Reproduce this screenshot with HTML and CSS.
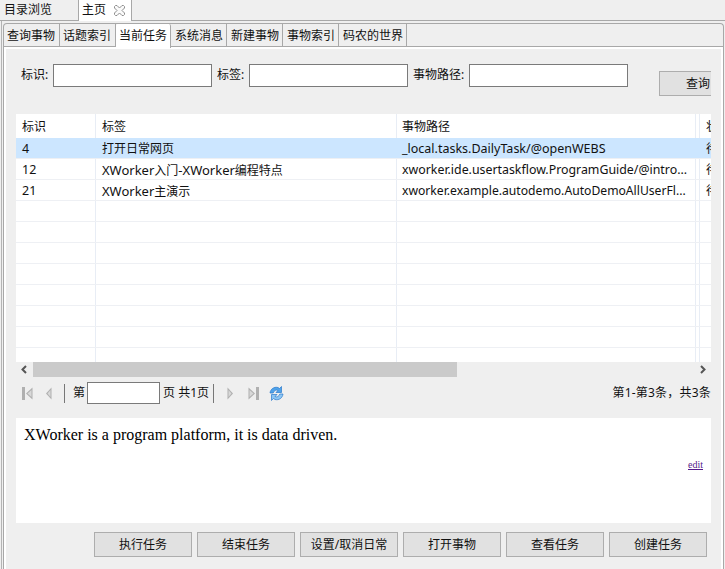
FILE: index.html
```html
<!DOCTYPE html>
<html lang="zh">
<head>
<meta charset="utf-8">
<title>主页</title>
<link rel="stylesheet" href="styles.css">
</head>
<body>
<div class="outer-tabs">
  <div class="otab">目录浏览</div>
  <div class="otab active">主页<svg class="close" width="11" height="11" viewBox="0 0 11 11"><path d="M.5 1.500l1-1h1.500l2.500 2.500L8 .5h1.500l1 1V3L8 5.500 10.500 8v1.500l-1 1H8L5.500 8 3 10.500H1.500l-1-1V8L3 5.500.5 3z" fill="#fafafa" stroke="#8e8e8e"/></svg></div>
</div>
<div class="shell">
<div class="folder">
  <div class="inner-tabs">
    <div class="itab">查询事物</div>
    <div class="itab">话题索引</div>
    <div class="itab active">当前任务</div>
    <div class="itab">系统消息</div>
    <div class="itab">新建事物</div>
    <div class="itab">事物索引</div>
    <div class="itab">码农的世界</div>
  </div>
  <div class="panel">
    <div class="clip">
      <div class="form">
        <label class="lbl l1">标识:</label><div class="input"></div>
        <label class="lbl l2">标签:</label><div class="input"></div>
        <label class="lbl l3">事物路径:</label><div class="input"></div>
        <div class="btn query">查询</div>
      </div>
      <div class="grid">
        <div class="row head"><span class="c1">标识</span><span class="c2">标签</span><span class="c3">事物路径</span><span class="c4"></span><span class="c5">状态</span></div>
        <div class="row sel"><span class="c1 lat">4</span><span class="c2">打开日常网页</span><span class="c3 lat">_local.tasks.DailyTask/@openWEBS</span><span class="c4"></span><span class="c5">待</span></div>
        <div class="row"><span class="c1 lat">12</span><span class="c2"><b class="name">XWorker</b>入门<b class="name">-XWorker</b>编程特点</span><span class="c3 fit-a">xworker.ide.usertaskflow.ProgramGuide/@intro...</span><span class="c4"></span><span class="c5">待</span></div>
        <div class="row"><span class="c1 lat">21</span><span class="c2"><b class="name">XWorker</b>主演示</span><span class="c3 fit-b">xworker.example.autodemo.AutoDemoAllUserFl...</span><span class="c4"></span><span class="c5">待</span></div>
        <div class="row"><span class="c1"></span><span class="c2"></span><span class="c3"></span><span class="c4"></span><span class="c5"></span></div>
        <div class="row"><span class="c1"></span><span class="c2"></span><span class="c3"></span><span class="c4"></span><span class="c5"></span></div>
        <div class="row"><span class="c1"></span><span class="c2"></span><span class="c3"></span><span class="c4"></span><span class="c5"></span></div>
        <div class="row"><span class="c1"></span><span class="c2"></span><span class="c3"></span><span class="c4"></span><span class="c5"></span></div>
        <div class="row"><span class="c1"></span><span class="c2"></span><span class="c3"></span><span class="c4"></span><span class="c5"></span></div>
        <div class="row"><span class="c1"></span><span class="c2"></span><span class="c3"></span><span class="c4"></span><span class="c5"></span></div>
        <div class="row"><span class="c1"></span><span class="c2"></span><span class="c3"></span><span class="c4"></span><span class="c5"></span></div>
        <div class="row"><span class="c1"></span><span class="c2"></span><span class="c3"></span><span class="c4"></span><span class="c5"></span></div>
      </div>
      <div class="hscroll">
        <svg class="arrow" width="17" height="15" viewBox="0 0 17 15"><path d="M10 4 6.500 7.500 10 11" fill="none" stroke="#555" stroke-width="2"/></svg>
        <div class="thumb"></div>
        <div class="track"></div>
        <svg class="arrow" width="17" height="15" viewBox="0 0 17 15"><path d="M7 4 10.500 7.500 7 11" fill="none" stroke="#555" stroke-width="2"/></svg>
      </div>
      <div class="pager">
        <svg class="pi first" width="11" height="13" viewBox="0 0 11 13"><path d="M0 0h3v13H0zM10.500 .5v12L4 6.500z" fill="#b0b0b0"/><path d="M9.500 3v7L5.500 6.500z" fill="#d8d8d8"/></svg>
        <svg class="pi prev" width="6" height="13" viewBox="0 0 6 13"><path d="M5.500 .5v12L0 6.500z" fill="#b0b0b0"/><path d="M4.500 3v7L1.500 6.500z" fill="#d8d8d8"/></svg>
        <span class="sep sep1"></span>
        <span class="ptext">第</span>
        <div class="input page"></div>
        <span class="ptext">页 共1页</span>
        <span class="sep sep2"></span>
        <svg class="pi next" width="6" height="13" viewBox="0 0 6 13"><path d="M.5 .5v12L6 6.500z" fill="#b0b0b0"/><path d="M1.500 3v7L4.500 6.500z" fill="#d8d8d8"/></svg>
        <svg class="pi last" width="11" height="13" viewBox="0 0 11 13"><path d="M8 0h3v13H8zM.5 .5v12L7 6.500z" fill="#b0b0b0"/><path d="M1.500 3v7L5.500 6.500z" fill="#d8d8d8"/></svg>
        <svg class="pi refresh" width="15" height="15" viewBox="0 0 15 15"><path d="M1 7C1.500 3 5 .5 9 1.500l1.500 1L12.500 .5V6.500H7L9 4.500C7 3.500 5 4.500 4.200 7z" fill="#4fa3ea" stroke="#2a78cc" stroke-width=".7"/><path d="M14 8C13.500 12 10 14.500 6 13.500l-1.500-1L2.500 14.500V8.500H8L6 10.500c2 1 4 0 4.800-2.500z" fill="#8cc6f4" stroke="#2a78cc" stroke-width=".7"/></svg>
        <span class="count">第1-第3条，共3条</span>
      </div>
      <div class="editor">
        <p class="doc">XWorker is a program platform, it is data driven.</p>
        <a class="edit" href="#">edit</a>
      </div>
    </div>
    <div class="actions">
      <div class="btn">执行任务</div>
      <div class="btn">结束任务</div>
      <div class="btn">设置/取消日常</div>
      <div class="btn">打开事物</div>
      <div class="btn">查看任务</div>
      <div class="btn">创建任务</div>
    </div>
  </div>
</div>
</div>
</body>
</html>
```
FILE: styles.css
```css
* { box-sizing: border-box; }
html, body { margin: 0; padding: 0; }
body {
  width: 725px;
  height: 569px;
  overflow: hidden;
  background: #efefef;
  color: #111;
  font: 12px/16px "Noto Sans", "Noto Sans CJK SC", sans-serif;
}
.lat { font-size: 12.5px; }
.name { font-size: 13px; font-weight: 400; }
.fit-a { font-size: 12.37px; }
.fit-b { font-size: 12.16px; }
.outer-tabs {
  display: flex;
  height: 21px;
  border-bottom: 1px solid #a8a8a8;
}
.otab {
  width: 79px;
  padding: 2px 0 0 4px;
  border-right: 1px solid #a8a8a8;
  white-space: nowrap;
}
.otab.active {
  width: 53px;
  padding-left: 3px;
  background: #fff;
  height: 21px;
  display: flex;
  gap: 8px;
}
.close { margin-top: 3px; flex: none; }
.shell {
  height: 548px;
  margin-left: 1px;
  padding: 2px 1px 0 1px;
  border-left: 1px solid #b4b4b4;
}
.folder {
  height: 546px;
  border: 1px solid #a8a8a8;
  border-bottom: 0;
  border-radius: 4px 4px 0 0;
}
.inner-tabs {
  display: flex;
  height: 23px;
  border-bottom: 1px solid #a8a8a8;
}
.itab {
  width: 56px;
  padding: 4px 0 0 4px;
  border-right: 1px solid #a8a8a8;
  white-space: nowrap;
}
.itab:nth-child(-n+3) { padding-left: 3px; }
.itab:nth-child(3) { width: 55px; }
.itab:last-child { width: 68px; }
.itab.active {
  background: #fff;
  height: 24px;
  border-radius: 2px 2px 0 0;
}
.panel {
  height: 522px;
  border: 2px solid #fff;
  border-bottom: 0;
  padding-left: 10px;
}
.clip { width: 695px; overflow: hidden; }
.form {
  height: 65px;
  display: flex;
  align-items: flex-start;
  padding: 15px 0 0 5px;
  white-space: nowrap;
}
.lbl { margin-top: 3px; flex: none; }
.l1 { width: 32px; }
.l2 { width: 32px; margin-left: 5px; }
.l3 { width: 56px; margin-left: 5px; }
.input {
  flex: none;
  width: 159px;
  height: 23px;
  background: #fff;
  border: 1px solid #7a7a7a;
}
.btn {
  width: 98px;
  height: 25px;
  flex: none;
  background: #e1e1e1;
  border: 1px solid #adadad;
  text-align: center;
  line-height: 24px;
  color: #111;
}
.query { width: 78px; margin: 7px 0 0 31px; }
.grid { background: #fff; height: 248px; overflow: hidden; }
.row {
  display: flex;
  height: 21px;
  border-bottom: 1px solid #eef0f4;
}
.head { height: 24px; border-bottom: 0; }
.sel { background: #cce6ff; border-bottom-color: #eef0f4; }
.row span {
  flex: none;
  padding-left: 6px;
  height: 100%;
  line-height: 22px;
  white-space: nowrap;
  overflow: hidden;
  border-right: 1px solid #e8edf5;
}
.head span { line-height: 25px; }
.sel span { border-right-color: #cce6ff; }
.row .c1 { width: 80px; }
.row .c2 { width: 301px; }
.row .c3 { width: 299px; padding-left: 5px; }
.row .c4 { width: 4px; padding: 0; }
.row .c5 { width: 40px; border-right: 0; }
.hscroll { display: flex; height: 15px; }
.arrow { flex: none; }
.thumb { width: 424px; background: #cacaca; }
.track { width: 237px; }
.pager {
  display: flex;
  align-items: center;
  height: 41px;
  padding-bottom: 9px;
}
.pi { flex: none; }
.first { margin-left: 6px; }
.prev { margin-left: 13px; }
.sep { width: 1px; height: 19px; background: #777; flex: none; }
.sep1 { margin: 0 8px 0 12px; }
.sep2 { margin: 0 13px 0 4px; }
.ptext { white-space: nowrap; }
.input.page { width: 73px; height: 22px; margin: 0 3px 0 2px; }
.next { margin-right: 15px; }
.last { margin-right: 10px; }
.count { margin-left: auto; white-space: nowrap; letter-spacing: .2px; }
.editor {
  position: relative;
  background: #fff;
  height: 105px;
  padding: 8px;
}
.doc {
  margin: 0;
  font: 16px/18px "Liberation Serif", serif;
  color: #000;
}
.edit {
  position: absolute;
  right: 8px;
  top: 41px;
  font: 10px/12px "Liberation Serif", serif;
  color: #551a8b;
}
.actions {
  display: flex;
  gap: 5px;
  justify-content: flex-end;
  padding: 9px 7px 0 0;
  width: 698px;
}
```
